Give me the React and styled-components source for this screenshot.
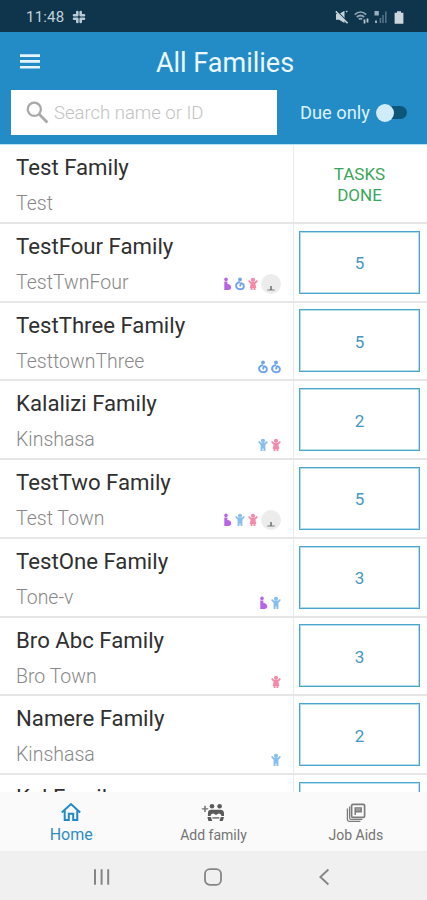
import React from 'react'

import styled, { createGlobalStyle } from 'styled-components';


const families = [
    { name: 'Test Family', town: 'Test', members: [], done: true },
    { name: 'TestFour Family', town: 'TestTwnFour', members: ['pregnant', 'mother', 'girl', 'other'], tasks: 5 },
    { name: 'TestThree Family', town: 'TesttownThree', members: ['mother', 'mother'], tasks: 5 },
    { name: 'Kalalizi Family', town: 'Kinshasa', members: ['boy', 'girl'], tasks: 2 },
    { name: 'TestTwo Family', town: 'Test Town', members: ['pregnant', 'boy', 'girl', 'other'], tasks: 5 },
    { name: 'TestOne Family', town: 'Tone-v', members: ['pregnant', 'boy'], tasks: 3 },
    { name: 'Bro Abc Family', town: 'Bro Town', members: ['girl'], tasks: 3 },
    { name: 'Namere Family', town: 'Kinshasa', members: ['boy'], tasks: 2 },
    { name: 'Kal Family', members: [] },
]

const Child = ({ color, dress }) => (
    <svg width="10" height="14" viewBox="0 0 10 14" fill={color}>
        <circle cx="5" cy="2.8" r="2.1" />
        <path d="M0.9 2.8 L3.2 4.8 H6.8 L9.1 2.8 L9.7 4.4 L7.4 6.8 V13 H5.5 V10.4 H4.5 V13 H2.6 V6.8 L0.3 4.4 Z" />
        {dress && <path d="M3 6.5 H7 L8.4 11 H1.6 Z" />}
    </svg>
)

const MemberIcon = ({ type }) => {
    if (type === 'pregnant') {
        return (
            <svg width="10" height="14" viewBox="0 0 10 14" fill="#b764e6">
                <circle cx="4" cy="2.4" r="1.8" />
                <path d="M2.3 4.4 H5.4 V7 C7.6 7 9.2 8.4 9.2 10.2 C9.2 11.9 8 13 6.4 13 H2.3 Z" />
            </svg>
        )
    }
    if (type === 'mother') {
        return (
            <svg width="10" height="14" viewBox="0 0 10 14">
                <circle cx="5" cy="2.4" r="1.9" fill="#6fa3ec" />
                <path d="M4.2 5.2 C2 6 0.9 7.4 1.1 9 C1.4 11.2 3.1 12.2 5 12.2 C7 12.2 8.9 11 8.9 8.9 C8.9 7.7 8 6.8 6.8 6.4 C5.6 6 5.4 7 5.3 8.6" fill="none" stroke="#6fa3ec" strokeWidth="1.9" strokeLinecap="round" />
            </svg>
        )
    }
    if (type === 'other') {
        return (
            <OtherBadge>
                <svg width="8" height="6" viewBox="0 0 8 6">
                    <path d="M0.3 5 H7.7" stroke="#888" strokeWidth="1.1" />
                    <path d="M4 1 V5" stroke="#666" strokeWidth="1.4" />
                </svg>
            </OtherBadge>
        )
    }
    return <Child color={type === 'boy' ? '#86bfee' : '#f58aa8'} dress={type === 'girl'} />
}

const FamilyRow = ({ name, town, members, tasks, done }) => (
    <Row>
        <RowInfo>
            <RowName>{name}</RowName>
            <RowTown>{town}</RowTown>
            <Members $badge={members.includes('other')}>
                {members.map((m, i) => <MemberIcon key={`member${i}`} type={m} />)}
            </Members>
        </RowInfo>
        <RowAction>
            {done ? <TasksDone>TASKS DONE</TasksDone> : <TaskButton>{tasks}</TaskButton>}
        </RowAction>
    </Row>
)

const App = () => {
    return (
        <Screen>
            <GlobalStyle />
            <StatusBar>
                <Clock>11:48</Clock>
                <svg width="14" height="14" viewBox="0 0 14 14" stroke="#b9cbd6" strokeWidth="2.6" strokeLinecap="round">
                    <path d="M5.3 2 V5.3 M2 5.3 H5.3 M8.7 2 V5.3 M8.7 5.3 H12 M5.3 8.7 V12 M2 8.7 H5.3 M8.7 8.7 V12 M8.7 8.7 H12" />
                </svg>
                <StatusIcons>
                    <svg width="14" height="14" viewBox="0 0 14 14">
                        <path d="M1 4 H4 L9.5 0.8 V13 L4 9.8 H1 Z" fill="#c5d2da" />
                        <path d="M1 0 L12.5 12" stroke="#0f354c" strokeWidth="1.3" />
                        <path d="M0.8 1.4 L12.6 13.2" stroke="#c5d2da" strokeWidth="1.6" />
                        <path d="M11 2 L12.4 1" stroke="#c5d2da" strokeWidth="1.3" />
                    </svg>
                    <svg width="15" height="13" viewBox="0 0 15 13" fill="none" stroke="#8fa6b4" strokeWidth="1.8">
                        <path d="M0.8 3.6 C4.2 0.4 8.8 0.4 12.2 3.6 M2.8 6 C5.2 4 7.8 4 10.2 6 M4.8 8.3 C6 7.4 7 7.4 8.2 8.3" />
                        <path d="M10.5 8.5 V12.5 M13.5 7.5 V11.5" stroke="#b5c5ce" />
                    </svg>
                    <svg width="13" height="14" viewBox="0 0 13 14">
                        <path d="M0.5 1 H4.8 V5.5 H0.5 Z M1 10.5 H3 V13 H1 Z" fill="#9bb0bc" />
                        <path d="M6.4 8 V13 M9 5 V13 M11.8 1.5 V13" stroke="#58758a" strokeWidth="1.5" />
                    </svg>
                    <svg width="10" height="13" viewBox="0 0 10 13" fill="#cbd6dd">
                        <path d="M3 0.3 H7 V1.8 H9.4 V12.8 H0.6 V1.8 H3 Z" />
                    </svg>
                </StatusIcons>
            </StatusBar>

            <Header>
                <TitleBar>
                    <MenuButton aria-label="Menu">
                        <svg width="20" height="16" viewBox="0 0 20 16" stroke="#e6f4fc" strokeWidth="2.6">
                            <path d="M0 1.6 H20 M0 7.4 H20 M0 13.2 H20" />
                        </svg>
                    </MenuButton>
                    <Title>All Families</Title>
                </TitleBar>
                <SearchBar>
                    <SearchBox>
                        <svg width="23" height="23" viewBox="0 0 23 23" fill="none" stroke="#a9a9a9">
                            <circle cx="8.3" cy="8.3" r="6.6" strokeWidth="2.3" />
                            <path d="M13.2 13.2 L21.4 21.4" strokeWidth="2.8" />
                        </svg>
                        <SearchInput placeholder="Search name or ID" />
                    </SearchBox>
                    <DueLabel>Due only</DueLabel>
                    <Switch><SwitchThumb /></Switch>
                </SearchBar>
            </Header>

            <List>
                {families.map((f, i) => <FamilyRow key={`family${i}`} {...f} />)}
            </List>

            <TabBar>
                <Tab $active>
                    <svg width="20" height="20" viewBox="0 0 20 20" fill="none" stroke="#2389c6" strokeWidth="2">
                        <path d="M0.8 10.6 L10 2 L19.2 10.6" />
                        <path d="M3.7 8.5 V18 H7.8 V11.8 H12.2 V18 H16.3 V8.5" />
                    </svg>
                    <TabLabel $active>Home</TabLabel>
                </Tab>
                <Tab>
                    <svg width="24" height="20" viewBox="0 0 24 20" fill="#5a5a5a">
                        <path d="M0.8 5.2 H3.2 V2.8 H4.8 V5.2 H7.2 V6.6 H4.8 V9 H3.2 V6.6 H0.8 Z" fill="#777" />
                        <circle cx="11" cy="3.2" r="2.3" />
                        <circle cx="18.6" cy="3.2" r="2.3" />
                        <path d="M6.9 10.6 C6.9 7.8 8.2 6.8 10.4 6.8 H19.4 C21.8 6.8 23 8 23 10.6 V13 H20.4 C20.2 11.4 19.4 10.4 17.6 10.4 L15 12 L12.4 10.4 C10.6 10.4 9.8 11.4 9.6 13 H6.9 Z" />
                        <path d="M6.4 14 H10 L11.2 18 H7.4 Z M19.8 14 H23 L21.8 18 H18.4 Z" />
                        <path d="M11.4 14 H18.4 V15.8 H11.4 Z" fill="#888" />
                    </svg>
                    <TabLabel>Add family</TabLabel>
                </Tab>
                <Tab>
                    <svg width="20" height="20" viewBox="0 0 20 20" fill="none" stroke="#7c7c7c" strokeWidth="1.7">
                        <rect x="5.6" y="1.4" width="13" height="13" rx="1.4" />
                        <path d="M3.6 3.6 V14.8 Q3.6 16.4 5.2 16.4 H16.4" strokeWidth="1.3" />
                        <path d="M1.4 5.4 V16.6 Q1.4 18.4 3.2 18.4 H14.4" strokeWidth="1.3" />
                        <path d="M9.2 12 V5 H15.2 V8.8 H9.2 M9.2 6.9 H15.2" strokeWidth="1.5" />
                    </svg>
                    <TabLabel>Job Aids</TabLabel>
                </Tab>
            </TabBar>

            <SystemBar>
                <svg width="18" height="18" viewBox="0 0 18 18" stroke="#858585" strokeWidth="2">
                    <path d="M2 1.2 V16.8 M8.6 1.2 V16.8 M15.2 1.2 V16.8" />
                </svg>
                <svg width="18" height="18" viewBox="0 0 18 18" fill="none" stroke="#858585" strokeWidth="1.8">
                    <rect x="1" y="1.2" width="16" height="15.6" rx="4.8" />
                </svg>
                <svg width="18" height="18" viewBox="0 0 18 18" fill="none" stroke="#858585" strokeWidth="1.9">
                    <path d="M13.4 1.5 L5.4 9 L13.4 16.5" />
                </svg>
            </SystemBar>
        </Screen>
    )
}

export default App;


const GlobalStyle = createGlobalStyle`
    * {
        box-sizing: border-box;
    }
    body {
        margin: 0;
        background: #fff;
        font-family: Roboto, 'Liberation Sans', sans-serif;
    }
    svg {
        display: block;
        flex-shrink: 0;
    }
`

const Screen = styled.div`
    display: flex;
    flex-direction: column;
    width: 427px;
    height: 900px;
    overflow: hidden;
`

const StatusBar = styled.div`
    display: flex;
    align-items: center;
    height: 32px;
    flex-shrink: 0;
    padding: 2px 23px 0 26px;
    background: #0f354c;
`

const Clock = styled.span`
    width: 46px;
    color: #c3d0d8;
    font-size: 15px;
    letter-spacing: 0.2px;
`

const StatusIcons = styled.div`
    display: flex;
    align-items: center;
    gap: 5px;
    margin-left: auto;

    svg:last-child {
        margin-left: 2px;
    }
`

const Header = styled.header`
    height: 113px;
    flex-shrink: 0;
    background: #238cc7;
    border-bottom: 1px solid #b5e4f8;
`

const TitleBar = styled.div`
    display: grid;
    grid-template-columns: 58px 1fr 35px;
    align-items: center;
    height: 58px;
    padding-top: 2px;
`

const MenuButton = styled.button`
    display: flex;
    padding: 0 0 0 20px;
    background: none;
    border: none;
`

const Title = styled.h1`
    margin: 0;
    padding-top: 2px;
    color: #ecf8ff;
    font-size: 27px;
    font-weight: 400;
    text-align: center;
`

const SearchBar = styled.div`
    display: flex;
    align-items: center;
    padding-left: 11px;
`

const SearchBox = styled.div`
    display: flex;
    align-items: center;
    width: 266px;
    height: 45px;
    padding-left: 15px;
    background: #fff;
`

const SearchInput = styled.input`
    width: 200px;
    padding: 0 0 0 5px;
    border: none;
    outline: none;
    background: none;
    font-family: inherit;
    font-size: 18.5px;
    font-weight: 300;

    &::placeholder {
        color: #c2c2c2;
        opacity: 1;
    }
`

const DueLabel = styled.label`
    width: 76px;
    margin-left: 23px;
    color: #dcf1fc;
    font-size: 18.3px;
    white-space: nowrap;
`

const Switch = styled.div`
    display: flex;
    align-items: center;
    width: 31px;
    height: 13px;
    border-radius: 7px;
    background: #0e5679;
`

const SwitchThumb = styled.div`
    width: 18px;
    height: 18px;
    flex-shrink: 0;
    border-radius: 50%;
    background: #d0ecfb;
`

const List = styled.main`
    flex: 1;
    min-height: 0;
    overflow: hidden;
`

const Row = styled.div`
    display: flex;
    height: 78.75px;
    border-bottom: 2px solid #e6e6e6;
`

const RowInfo = styled.div`
    display: grid;
    grid-template-columns: 1fr auto;
    grid-template-rows: 44px 1fr;
    width: 294px;
    padding: 0 12px 0 16px;
    border-right: 1px solid #ebebeb;
`

const RowName = styled.div`
    grid-column: 1 / span 2;
    padding-top: 9px;
    color: #303030;
    font-size: 22.2px;
    line-height: 26px;
`

const RowTown = styled.div`
    padding-top: 3px;
    color: #888;
    font-size: 19.5px;
    font-weight: 300;
    line-height: 24px;
`

const Members = styled.div`
    display: flex;
    align-items: center;
    gap: 3px;
    height: 20px;
    margin-top: ${props => props.$badge ? '6px' : '10px'};
`

const OtherBadge = styled.div`
    display: flex;
    align-items: flex-end;
    justify-content: center;
    width: 20px;
    height: 20px;
    padding-bottom: 3px;
    border-radius: 50%;
    background: #ececec;
`

const RowAction = styled.div`
    display: flex;
    flex: 1;
    align-items: center;
    justify-content: center;
    padding: 0 7px 0 5px;
`

const TasksDone = styled.div`
    width: 70px;
    padding-top: 3px;
    color: #3aa65a;
    font-size: 17px;
    line-height: 20.5px;
    text-align: center;
`

const TaskButton = styled.button`
    width: 121px;
    height: 63px;
    padding: 2px 0 0;
    background: #fff;
    border: 1px solid #4ba5cb;
    box-shadow: inset 0 0 0 1px #b4dcea;
    color: #4597c2;
    font-family: inherit;
    font-size: 17px;
`

const TabBar = styled.nav`
    display: grid;
    grid-template-columns: repeat(3, 1fr);
    height: 59px;
    flex-shrink: 0;
    background: #fafafa;
`

const Tab = styled.div`
    display: flex;
    flex-direction: column;
    align-items: center;
    padding-top: ${props => props.$active ? '10px' : '11px'};
`

const TabLabel = styled.span`
    margin-top: ${props => props.$active ? '4px' : '3px'};
    color: ${props => props.$active ? '#2f8dc4' : '#747474'};
    font-size: ${props => props.$active ? '16px' : '14px'};
    line-height: 18px;
`

const SystemBar = styled.div`
    display: flex;
    align-items: center;
    justify-content: space-between;
    height: 49px;
    flex-shrink: 0;
    padding: 2px 94px 0 93px;
    background: #f0f0f0;
`
